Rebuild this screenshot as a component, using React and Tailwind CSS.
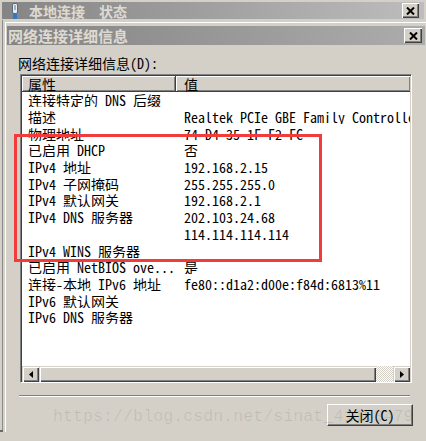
import React from 'react';

const rows = [
  ['连接特定的 DNS 后缀', ''],
  ['描述', 'Realtek PCIe GBE Family Controller'],
  ['物理地址', '74-D4-35-1F-F2-FC'],
  ['已启用 DHCP', '否'],
  ['IPv4 地址', '192.168.2.15'],
  ['IPv4 子网掩码', '255.255.255.0'],
  ['IPv4 默认网关', '192.168.2.1'],
  ['IPv4 DNS 服务器', '202.103.24.68'],
  ['', '114.114.114.114'],
  ['IPv4 WINS 服务器', ''],
  ['已启用 NetBIOS ove...', '是'],
  ['连接-本地 IPv6 地址', 'fe80::d1a2:d00e:f84d:6813%11'],
  ['IPv6 默认网关', ''],
  ['IPv6 DNS 服务器', ''],
];

function CloseBox({ className }) {
  return (
    <div className={`flex items-center justify-center bg-[#d4d0c8] shadow-[inset_1px_1px_0_#fff,inset_-1px_-1px_0_#404040,inset_-2px_-2px_0_#808080] ${className}`}>
      <svg width="9" height="8" viewBox="0 0 9 8">
        <path d="M1 0.5 L8 7.5 M8 0.5 L1 7.5" stroke="#000" strokeWidth="2" />
      </svg>
    </div>
  );
}

function PlugIcon() {
  return (
    <svg width="8" height="16" viewBox="0 0 8 16" className="ml-[9px] shrink-0">
      <rect x="1.5" y="0.5" width="5" height="10" rx="1.5" fill="#e8eef4" stroke="#5b6b7c" />
      <rect x="3" y="2" width="2" height="5" fill="#9fb3c8" />
      <rect x="2" y="11" width="4" height="5" fill="#2f78c8" />
    </svg>
  );
}

function ScrollBtn({ dir }) {
  return (
    <div className="w-[17px] h-[16px] flex items-center justify-center bg-[#d4d0c8] shadow-[inset_1px_1px_0_#d4d0c8,inset_2px_2px_0_#fff,inset_-1px_-1px_0_#404040,inset_-2px_-2px_0_#808080]">
      <svg width="4" height="7" viewBox="0 0 4 7">
        {dir === 'left'
          ? <path d="M4 0 L0 3.5 L4 7 Z" fill="#000" />
          : <path d="M0 0 L4 3.5 L0 7 Z" fill="#000" />}
      </svg>
    </div>
  );
}

export default function App() {
  return (
    <div className="relative w-[426px] h-[441px] overflow-hidden bg-[#d4d0c8] text-black font-['Noto_Sans_Mono_CJK_SC','Noto_Sans_CJK_SC',monospace]">
      {/* outer window title */}
      <div className="mx-[2px] mt-[2px] h-[17px] flex items-center bg-linear-to-r from-[#858585] to-[#bdbdbd]">
        <PlugIcon />
        <span className="ml-[10px] text-[14px] leading-none font-bold text-[#dedad2] font-['Noto_Sans_CJK_SC',sans-serif]">本地连接　状态</span>
        <CloseBox className="ml-auto mr-[5px] w-[17px] h-[15px]" />
      </div>

      <div className="flex">
        <div className="flex flex-col w-[4px] mt-[1px]">
          <div className="h-[410px] w-[3px] border-r border-[#8a8a8a]" />
          <div className="h-[2px] w-[3px] bg-[#6a6a6a]" />
        </div>

        {/* inner dialog */}
        <div className="flex-1 ml-[1px] mt-[3px] border-l border-t border-white pl-[1px] pt-[3px]">
          <div className="h-[19px] mr-[1px] flex items-center bg-linear-to-r from-[#848484] to-[#acacac]">
            <span className="ml-[1px] text-[15px] leading-none font-bold text-[#dedad2] font-['Noto_Sans_CJK_SC',sans-serif]">网络连接详细信息</span>
            <CloseBox className="ml-auto mr-[3px] w-[18px] h-[15px]" />
          </div>

          <div className="pl-[13px]">
            <div className="-ml-[2px] mt-[11px] h-[14px] text-[14px] leading-[14px]">网络连接详细信息(D):</div>

            {/* list box */}
            <div className="mt-[4px] w-[392px] h-[309px] flex flex-col bg-white border border-t-[#808080] border-l-[#808080] border-b-white border-r-white shadow-[inset_1px_1px_0_#404040,inset_-1px_-1px_0_#d4d0c8] p-[1px]">
              <div className="flex h-[16px] text-[14px] leading-none">
                <div className="w-[154px] flex items-center pl-[6px] bg-[#d4d0c8] shadow-[inset_1px_1px_0_#fff,inset_-1px_-1px_0_#808080] border-r border-b border-[#404040]">属性</div>
                <div className="flex-1 flex items-center pl-[8px] bg-[#d4d0c8] shadow-[inset_1px_1px_0_#fff,inset_-1px_-1px_0_#808080] border-b border-[#404040]">值</div>
              </div>

              <div className="flex-1 overflow-hidden">
                {rows.map(([k, v], i) => (
                  <div key={i} className="flex h-[16.7px] items-center text-[14px] leading-none">
                    <div className="w-[156px] pl-[6px] whitespace-nowrap overflow-hidden">{k}</div>
                    <div className="flex-1 pl-[6px] whitespace-nowrap overflow-hidden">{v}</div>
                  </div>
                ))}
              </div>

              {/* horizontal scrollbar */}
              <div className="flex h-[16px] mb-[-1px]">
                <ScrollBtn dir="left" />
                <div className="w-[337px] h-[16px] bg-[#d4d0c8] shadow-[inset_1px_1px_0_#d4d0c8,inset_2px_2px_0_#fff,inset_-1px_-1px_0_#404040,inset_-2px_-2px_0_#808080]" />
                <div className="flex-1 h-[16px] bg-[repeating-conic-gradient(#ffffff_0_25%,#d4d0c8_0_50%)] bg-[length:2px_2px]" />
                <ScrollBtn dir="right" />
              </div>
            </div>

            <div className="-ml-[1px] mt-[12px] w-[391px] h-[2px] border-t border-b border-t-[#808080] border-b-white" />

            <div className="mt-[7px] w-[392px] flex justify-end">
              <div className="w-[86px] h-[22px] -mr-[1px] flex items-center justify-center text-[14px] leading-none bg-[#d4d0c8] border border-t-white border-l-white border-b-[#404040] border-r-[#404040] shadow-[inset_-1px_-1px_0_#808080]">
                关闭(C)
              </div>
            </div>
          </div>
        </div>
      </div>

      {/* red annotation box */}
      <div className="absolute left-[14px] top-[134px] w-[308px] h-[128px] border-[3px] border-[#f23b3b]" />

      {/* watermark */}
      <div className="absolute left-[53px] top-[407px] text-[16.7px] leading-[20px] text-black/[0.09] font-['Liberation_Mono',monospace] whitespace-nowrap">
        https://blog.csdn.net/sinat_41153479
      </div>
    </div>
  );
}
